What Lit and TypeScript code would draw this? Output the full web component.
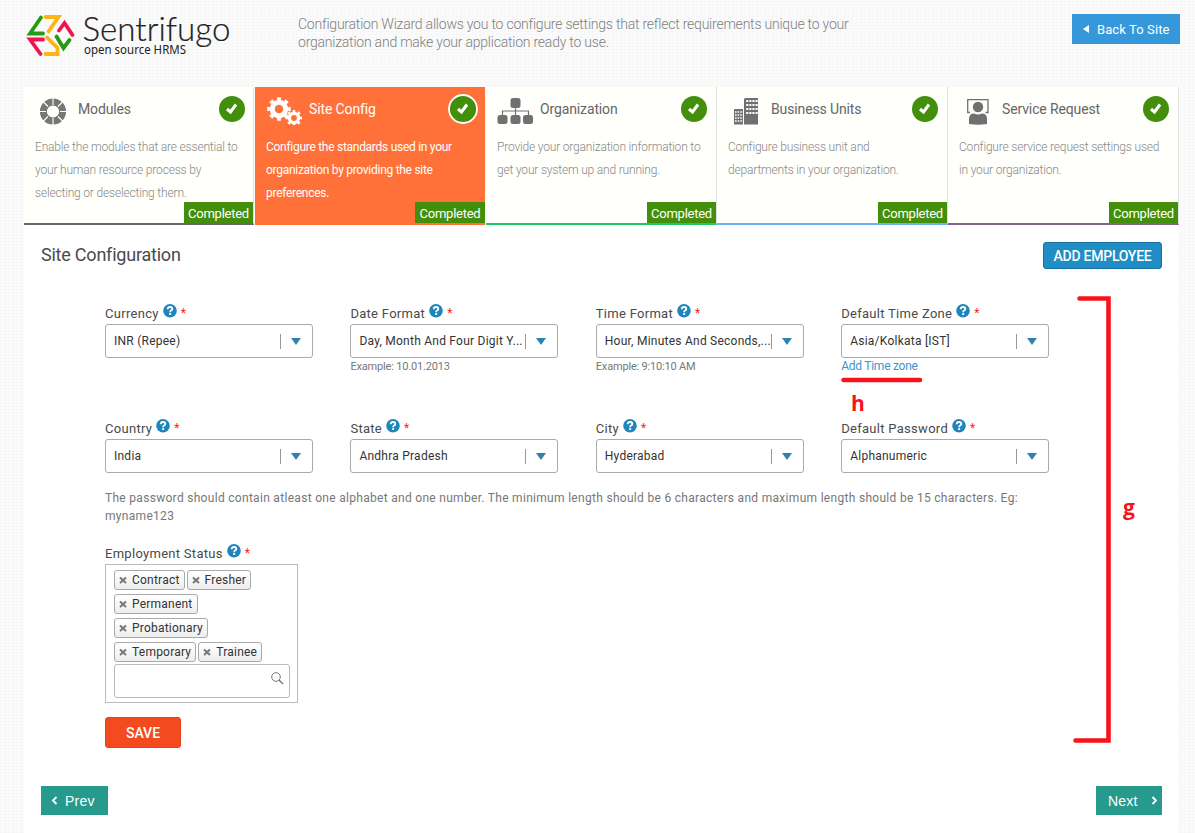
import { LitElement, html, css, svg, nothing } from "lit";
import { customElement, property } from "lit/decorators.js";

const base = css`
  * { box-sizing: border-box; }
  :host { font-family: Roboto, "Liberation Sans", sans-serif; }
  svg { display: block; }
`;

const gear = (cx: number, cy: number, r: number) => svg`
  <circle cx=${cx} cy=${cy} r=${r * 0.57} fill="none" stroke="#fff" stroke-width=${r * 0.42}></circle>
  <circle cx=${cx} cy=${cy} r=${r * 0.84} fill="none" stroke="#fff" stroke-width=${r * 0.32}
    pathLength="16" stroke-dasharray="1 1" stroke-dashoffset="0.5"></circle>`;

const icons: Record<string, unknown> = {
  modules: html`<svg width="38" height="28" viewBox="0 0 38 28">
    <circle cx="18" cy="14.500" r="9.600" fill="none" stroke="#777" stroke-width="7"></circle>
    <g stroke="#fff" stroke-width="1.100"><path d="M18 0V8M18 21V28M4 14.500H11M25 14.500H32M8 4.500L13 9.500M28 4.500L23 9.500M8 24.500L13 19.500M28 24.500L23 19.500"></path></g></svg>`,
  config: html`<svg width="38" height="28" viewBox="0 0 38 28">${gear(13, 12, 11.8)}${gear(28, 21, 8)}</svg>`,
  organization: html`<svg width="38" height="28" viewBox="0 0 38 28"><g fill="#6f7071">
    <rect x="13.500" y="1" width="10" height="10" rx="2.500"></rect><rect x="0.500" y="18" width="10" height="9" rx="2.500"></rect>
    <rect x="13.500" y="18" width="10" height="9" rx="2.500"></rect><rect x="26" y="18" width="10" height="9" rx="2.500"></rect></g>
    <path d="M5.500 18V14H31.500V18M18.500 10V18" fill="none" stroke="#6f7071" stroke-width="1.200"></path></svg>`,
  units: html`<svg width="38" height="28" viewBox="0 0 38 28"><path fill="#6f7071" d="M6 12H15V27.500H6zM17 1H30V27.500H16V2z"></path>
    <g stroke="#fff" stroke-width="1.800" stroke-dasharray="2.100 1"><path d="M18.200 4H30M18.200 8H30M18.200 12H30M18.200 16H30"></path><path d="M7 15H15M7 18H15M7 21H15M7 24H15" stroke-width="1.500" stroke-dasharray="1.600 1"></path></g></svg>`,
  service: html`<svg width="38" height="28" viewBox="0 0 38 28"><path d="M11 15.500H8.700V2.700H29V15.500H26.500" fill="none" stroke="#6f7071" stroke-width="1.300"></path>
    <circle cx="19" cy="10" r="5.200" fill="#6f7071"></circle><path fill="#6f7071" d="M10 27V22Q10 16.500 15 16.500Q19 18.500 23 16.500Q28 16.500 28 22V27Q19 28.500 10 27z"></path></svg>`,
};

@customElement("step-card")
class StepCard extends LitElement {
  @property() icon = "";
  @property() heading = "";
  @property({ type: Boolean, reflect: true }) active = false;
  @property({ attribute: false }) lines: string[] = [];
  static styles = [base, css`
    :host { display: flex; flex-direction: column; height: 138px; background: #fffffc; color: #888; border-right: 1px solid #e0e0e0; border-bottom: 2px solid var(--accent); }
    :host([active]) { background: #ff7138; color: #fff; border-color: #ff7138; }
    .top { display: flex; flex: none; height: 48px; padding: 10px 0 0 11px; }
    .title { flex: 1; margin: 5px 0 0 5px; font-size: 14px; line-height: 15px; letter-spacing: -.13px; color: #666; white-space: nowrap; }
    :host([active]) .title { color: #fff; }
    .check { margin: -3px 7px 0 0; }
    :host([active]) .check, :host(.dark) .check { margin-right: 6px; }
    .text { flex: 1 1 0; min-height: 0; padding: 1px 0 0 11px; font-size: 12px; font-weight: 300; line-height: 23px; letter-spacing: -.18px; white-space: nowrap; }
    :host([active]) .text { font-weight: 400; letter-spacing: -.28px; }
    .done { flex: none; align-self: flex-end; width: 69px; height: 21px; background: #438f0c; color: #fff; text-align: center; font-size: 13px; line-height: 23px; letter-spacing: -.25px; }
    :host([active]) .done { margin-right: -1px; width: 70px; }
  `];
  render() {
    return html`<div class="top">${icons[this.icon]}<span class="title">${this.heading}</span>
      <svg class="check" width="30" height="30" viewBox="0 0 30 30"><circle cx="15" cy="15" r=${this.active ? 14 : 13} fill="#438f0c" stroke=${this.active ? "#fff" : "none"} stroke-width="1.800"></circle>
      <path d="M10 15L13.500 18L19 10.500" fill="none" stroke="#fff" stroke-width="3"></path></svg></div>
      <div class="text">${this.lines.map((l) => html`<div>${l}</div>`)}</div><div class="done">Completed</div>`;
  }
}

@customElement("field-label")
class FieldLabel extends LitElement {
  @property() text = "";
  static styles = [base, css`
    :host { display: flex; height: 21px; color: #4a4a4a; font-size: 13px; line-height: 20px; letter-spacing: .29px; white-space: nowrap; }
    .caption { padding-top: 1px; }
    svg { margin: 0 0 0 4px; }
    .star { margin-left: 4px; color: #f22; font-size: 12px; line-height: 20px; }
  `];
  render() {
    return html`<span class="caption">${this.text}</span><svg width="14" height="15" viewBox="0 0 14 15"><circle cx="7" cy="7.700" r="6.800" fill="#1d87bd"></circle>
      <g transform="translate(0 .7)"><path d="M4.700 5.500Q4.800 3.300 7 3.300Q9.300 3.300 9.300 5.200Q9.300 6.200 8.100 6.800Q7.100 7.300 7.100 8.500" fill="none" stroke="#fff" stroke-width="1.800"></path><rect x="6.200" y="9.400" width="1.900" height="1.900" fill="#fff"></rect></g></svg><span class="star">*</span>`;
  }
}

@customElement("select-field")
class SelectField extends LitElement {
  @property() label = "";
  @property() value = "";
  @property() note = "";
  @property() link = "";
  static styles = [base, css`
    :host { display: block; height: 115px; }
    .box { display: flex; align-items: center; width: 208px; height: 34px; border: 1px solid #aaa; border-radius: 3px; background: #fff; padding: 0 11px 0 8px; }
    .value { flex: 1; color: #333; font-size: 12px; letter-spacing: .24px; white-space: nowrap; }
    .bar { width: 1px; height: 15px; background: #999; margin-right: 10px; }
    .note { margin-top: 1px; font-size: 11px; line-height: 16px; color: #777; letter-spacing: -.18px; white-space: nowrap; }
    .link { font-size: 12px; line-height: 16px; color: #3f93cc; letter-spacing: -.25px; }
  `];
  render() {
    return html`<field-label text=${this.label}></field-label><div class="box"><span class="value">${this.value}</span><span class="bar"></span>
      <svg width="10" height="7" viewBox="0 0 10 7"><path d="M0 0H10L5 7z" fill="#3182ae"></path></svg></div>
      ${this.note ? html`<div class="note">${this.note}</div>` : nothing}${this.link ? html`<div class="link">${this.link}</div>` : nothing}`;
  }
}

const steps = [
  { icon: "modules", heading: "Modules", accent: "dark", lines: ["Enable the modules that are essential to", "your human resource process by", "selecting or deselecting them."] },
  { icon: "config", heading: "Site Config", accent: "orange", lines: ["Configure the standards used in your", "organization by providing the site", "preferences."] },
  { icon: "organization", heading: "Organization", accent: "green", lines: ["Provide your organization information to", "get your system up and running."] },
  { icon: "units", heading: "Business Units", accent: "blue", lines: ["Configure business unit and", "departments in your organization."] },
  { icon: "service", heading: "Service Request", accent: "purple", lines: ["Configure service request settings used", "in your organization."] },
];
const fields = [
  { label: "Currency", value: "INR (Repee)" },
  { label: "Date Format", value: "Day, Month And Four Digit Y...", note: "Example: 10.01.2013" },
  { label: "Time Format", value: "Hour, Minutes And Seconds,...", note: "Example: 9:10:10 AM" },
  { label: "Default Time Zone", value: "Asia/Kolkata [IST]", link: "Add Time zone" },
  { label: "Country", value: "India" },
  { label: "State", value: "Andhra Pradesh" },
  { label: "City", value: "Hyderabad" },
  { label: "Default Password", value: "Alphanumeric" },
];
const tags = ["Contract", "Fresher", "Permanent", "Probationary", "Temporary", "Trainee"];

@customElement("app-root")
class AppRoot extends LitElement {
  static styles = [base, css`
    :host { display: block; position: relative; width: 1195px; height: 833px; overflow: hidden; background-color: #fbfbfb;
      background-image: repeating-linear-gradient(0deg, rgba(0,0,0,.01) 0 1px, transparent 1px 3px), repeating-linear-gradient(90deg, rgba(0,0,0,.01) 0 1px, transparent 1px 4px); }
    header { display: flex; height: 87px; padding: 0 15px 0 24px; }
    .logo { width: 274px; flex: none; }
    .intro { flex: 1; padding-top: 15px; font-size: 14px; font-weight: 300; line-height: 18px; letter-spacing: -.22px; color: #808080; white-space: nowrap; }
    .back { display: flex; align-items: center; gap: 8px; margin-top: 14px; width: 108px; height: 30px; padding-left: 11px; background: #3498db; color: #fff; font-size: 13px; letter-spacing: .1px; white-space: nowrap; }
    .steps { display: grid; grid-template-columns: repeat(5, 231px); margin-left: 24px; width: 1155px; }
    .dark { --accent: #666; margin-right: 1px; } .orange { --accent: #ff7138; margin-right: 0; } .green { --accent: #1fc866; } .blue { --accent: #67b3f5; } .purple { --accent: #80628a; }
    .orange { margin-right: 1px; }
    main { width: 1154px; height: 608px; margin-left: 24px; background: #fff; padding: 17px 16px 0 17px; }
    .headline { display: flex; justify-content: space-between; height: 61px; }
    h1 { margin: 3px 0 0; font-size: 18px; line-height: 20px; font-weight: 400; color: #4a4a4a; letter-spacing: -.22px; }
    .add { width: 119px; height: 27px; border: 1px solid #1873a4; border-radius: 3px; background: #208dc4; color: #fff; text-align: center; font-size: 14px; font-weight: 500; line-height: 27px; letter-spacing: -.25px; }
    form { display: block; margin-left: 64px; height: 483px; }
    .fields { display: grid; grid-template-columns: repeat(4, 245.4px); height: 230px; }
    .hint { height: 54px; margin-top: -44px; font-size: 12px; line-height: 18px; color: #777; letter-spacing: .3px; white-space: nowrap; }
    .multi { width: 193px; height: 139px; border: 1px solid #bbb; padding: 5px 8px; }
    .tags { display: flex; flex-wrap: wrap; gap: 4px 2px; width: 160px; }
    .tag { display: flex; align-items: center; height: 20px; gap: 5px; padding: 0 4px; border: 1px solid #aaa; border-radius: 3px; background: linear-gradient(#fff, #eee); color: #333; font-size: 12px; letter-spacing: .22px; }
    .search { display: flex; justify-content: flex-end; margin-top: 2px; width: 176px; height: 34px; padding: 7px 5px; border: 1px solid #bbb; border-radius: 3px; }
    .save { margin-top: 14px; width: 76px; height: 31px; border-radius: 3px; background: #f34a20; border: 1px solid #e2431b; color: #fff; text-align: center; font-size: 14px; font-weight: 500; line-height: 30px; }
    footer { display: flex; justify-content: space-between; }
    .nav { display: flex; align-items: center; height: 29px; background: #259a8d; color: #fff; font: 14px "Liberation Sans", sans-serif; letter-spacing: .2px; }
    .prev { width: 67px; padding-left: 10px; gap: 7px; }
    .next { width: 66px; padding-left: 12px; gap: 13px; }
    .marks { position: absolute; inset: 0; pointer-events: none; }
    .mark { font: 700 21px "Open Sans", sans-serif; fill: #f9131c; }
    .name { font: 300 33px Lato, sans-serif; fill: #222; stroke: #222; stroke-width: .2px; }
    .tagline { font: 400 12px "Noto Sans", sans-serif; fill: #222; }
  `];
  render() {
    return html`
      <header>
        <svg class="logo" width="274" height="70" viewBox="24 0 274 70">
          <g fill="none" stroke-width="3.800" stroke-linecap="round">
            <path stroke="#279a13" d="M41 17.500L30 33.500H43M56.500 36.500L63.500 48L69.500 40"></path>
            <path stroke="#fdb515" d="M45.500 17H58.500L48.500 31.500M47 37.500L57.500 48V54H45.500"></path>
            <path stroke="#f2144f" d="M59 30.500L64.500 23L72.500 35M43 39.500H30L40.500 54"></path>
          </g>
          <text class="name" x="82.500" y="41" textLength="148" lengthAdjust="spacingAndGlyphs">Sentrifugo</text>
          <text class="tagline" x="84" y="53.500" textLength="102" lengthAdjust="spacingAndGlyphs">open source HRMS</text>
        </svg>
        <div class="intro">Configuration Wizard allows you to configure settings that reflect requirements unique to your<br>organization and make your application ready to use.</div>
        <div class="back"><svg width="6" height="8" viewBox="0 0 6 8"><path d="M6 0V8L0 4z" fill="#fff"></path></svg>Back To Site</div>
      </header>
      <div class="steps">${steps.map((s) => html`<step-card class=${s.accent} icon=${s.icon} heading=${s.heading} .lines=${s.lines} ?active=${s.icon === "config"}></step-card>`)}</div>
      <main>
        <div class="headline"><h1>Site Configuration</h1><div class="add">ADD EMPLOYEE</div></div>
        <form>
          <div class="fields">${fields.map((f) => html`<select-field label=${f.label} value=${f.value} note=${f.note ?? ""} link=${f.link ?? ""}></select-field>`)}</div>
          <div class="hint">The password should contain atleast one alphabet and one number. The minimum length should be 6 characters and maximum length should be 15 characters. Eg:<br>myname123</div>
          <field-label text="Employment Status"></field-label>
          <div class="multi">
            <div class="tags">${tags.map((t) => html`<span class="tag"><svg width="8" height="8" viewBox="0 0 8 8"><path d="M1 1.500L7 7M7 1.500L1 7" stroke="#777" stroke-width="2"></path></svg>${t}</span>`)}</div>
            <div class="search"><svg width="13" height="13" viewBox="0 0 13 13"><circle cx="5" cy="5" r="4.300" fill="none" stroke="#777"></circle><path d="M8 8L12 12" stroke="#777" stroke-width="1.400"></path></svg></div>
          </div>
          <div class="save">SAVE</div>
        </form>
        <footer>
          <div class="nav prev"><svg width="7" height="9" viewBox="0 0 7 9"><path d="M5.500 1L2 4.500L5.500 8" fill="none" stroke="#fff" stroke-width="1.800"></path></svg>Prev</div>
          <div class="nav next">Next<svg width="7" height="9" viewBox="0 0 7 9"><path d="M1.500 1L5 4.500L1.500 8" fill="none" stroke="#fff" stroke-width="1.800"></path></svg></div>
        </footer>
      </main>
      <svg class="marks" width="1195" height="833" viewBox="0 0 1195 833">
        <path d="M843.500 380H920M1079.500 298.500H1108.500V740.500H1075.500" fill="none" stroke="#f9131c" stroke-width="4.600" stroke-linecap="round"></path>
        <text class="mark" x="851" y="411">h</text><text class="mark" x="1123" y="515">g</text>
      </svg>`;
  }
}
